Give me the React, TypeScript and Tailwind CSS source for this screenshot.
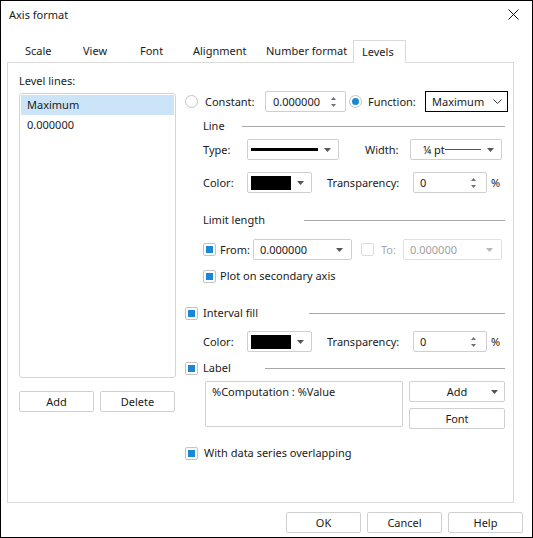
import type { ReactNode } from 'react';

const font = "font-['Noto_Sans',Arial,sans-serif]";

function Arrow({ disabled }: { disabled?: boolean }) {
  return (
    <svg width="7" height="4" viewBox="0 0 7 4" className="shrink-0">
      <path d="M0 0h7L3.5 4z" fill={disabled ? '#b8b8b8' : '#555555'} />
    </svg>
  );
}

function Spinner() {
  return (
    <svg width="7" height="12" viewBox="0 0 7 12" className="shrink-0">
      <path d="M3.5 1L6 4H1z" fill="#707070" />
      <path d="M3.5 11L6 8H1z" fill="#707070" />
    </svg>
  );
}

function Radio({ checked }: { checked?: boolean }) {
  return (
    <span className="flex h-[13px] w-[13px] shrink-0 items-center justify-center rounded-full border border-[#c4c4c4] bg-white">
      {checked && <span className="h-[7px] w-[7px] rounded-full bg-[#1c87d4]" />}
    </span>
  );
}

function Check({ checked, disabled }: { checked?: boolean; disabled?: boolean }) {
  return (
    <span
      className={`flex h-[13px] w-[13px] shrink-0 items-center justify-center rounded-[2px] border bg-white ${
        disabled ? 'border-[#dcdcdc]' : 'border-[#c4c4c4]'
      }`}
    >
      {checked && <span className="h-[7px] w-[7px] bg-[#1c87d4]" />}
    </span>
  );
}

function Box({ w, children, className = '' }: { w: string; children?: ReactNode; className?: string }) {
  return (
    <div className={`flex h-[21px] shrink-0 items-center rounded-[2px] border border-[#cfcfcf] bg-white ${w} ${className}`}>
      {children}
    </div>
  );
}

function Header({ label, lineStart, check }: { label: string; lineStart: string; check?: boolean }) {
  return (
    <div className="flex h-[16px] items-center">
      {check ? (
        <>
          <Check checked />
          <span className="ml-[5px]">{label}</span>
        </>
      ) : (
        <span className="ml-[18px]">{label}</span>
      )}
      <div className={`mr-[8px] h-px flex-1 bg-[#a8a8a8] ${lineStart}`} />
    </div>
  );
}

function ColorRow() {
  return (
    <div className="flex h-[21px] items-center pl-[18px]">
      <span className="w-[44px] shrink-0">Color:</span>
      <Box w="w-[65px]" className="justify-between pl-[3px] pr-[7px]">
        <span className="h-[14px] w-[40px] bg-black" />
        <Arrow />
      </Box>
      <span className="ml-[15px] w-[86px] shrink-0">Transparency:</span>
      <Box w="w-[74px]" className="justify-between pl-[6px] pr-[9px]">
        <span>0</span>
        <Spinner />
      </Box>
      <span className="ml-[4px]">%</span>
    </div>
  );
}

function Btn({ w, children, className = '' }: { w: string; children: ReactNode; className?: string }) {
  return (
    <div
      className={`flex h-[21px] shrink-0 items-center justify-center rounded-[2px] border border-[#d0d0d0] bg-white ${w} ${className}`}
    >
      {children}
    </div>
  );
}

export default function App() {
  const tabs = [
    { name: 'Scale', w: 'w-[58px]' },
    { name: 'View', w: 'w-[57px]' },
    { name: 'Font', w: 'w-[53px]' },
    { name: 'Alignment', w: 'w-[73px]' },
    { name: 'Number format', w: 'w-[96px]' },
  ];

  return (
    <div
      className={`${font} flex h-[538px] w-[533px] flex-col border border-black bg-white text-[11px] leading-[16px] whitespace-nowrap text-[#1b1b1b]`}
    >
      {/* Title bar */}
      <div className="flex h-[27px] shrink-0 items-center justify-between pl-[8px] pr-[13px]">
        <span>Axis format</span>
        <svg width="11" height="11" viewBox="0 0 11 11">
          <path d="M0.5 0.5l10 10M10.5 0.5l-10 10" stroke="#111" strokeWidth="1" />
        </svg>
      </div>

      {/* Tabs */}
      <div className="mt-[12px] flex h-[22px] shrink-0 items-start pl-[15px]">
        {tabs.map((t) => (
          <div key={t.name} className={`flex h-[22px] items-center pl-[9px] ${t.w}`}>
            {t.name}
          </div>
        ))}
        <div className="relative z-10 flex h-[23px] w-[53px] items-center border-x border-t border-[#d9d9d9] bg-white pl-[8px]">
          Levels
        </div>
      </div>

      {/* Panel */}
      <div className="ml-[6px] flex h-[441px] w-[507px] shrink-0 border border-[#d9d9d9]">
        {/* Left column */}
        <div className="flex w-[168px] shrink-0 flex-col pl-[11px] pt-[10px]">
          <div className="h-[16px]">Level lines:</div>
          <div className="mt-[4px] h-[285px] w-[157px] rounded-[3px] border border-[#d4d4d4] p-px">
            <div className="flex h-[20px] items-center bg-[#cce4f7] pl-[6px]">Maximum</div>
            <div className="flex h-[20px] items-center pl-[6px]">0.000000</div>
          </div>
          <div className="mt-[13px] flex gap-[6px]">
            <Btn w="w-[75px]">Add</Btn>
            <Btn w="w-[75px]">Delete</Btn>
          </div>
        </div>

        {/* Right column */}
        <div className="ml-[9px] flex flex-1 flex-col pt-[28px]">
          <div className="flex h-[21px] items-center">
            <Radio />
            <span className="ml-[7px] w-[60px] shrink-0">Constant:</span>
            <Box w="w-[81px]" className="justify-between pl-[7px] pr-[8px]">
              <span>0.000000</span>
              <Spinner />
            </Box>
            <span className="ml-[3px]">
              <Radio checked />
            </span>
            <span className="ml-[6px] w-[57px] shrink-0">Function:</span>
            <div className="flex h-[21px] w-[83px] shrink-0 items-center justify-between border border-black pl-[6px] pr-[5px]">
              <span>Maximum</span>
              <svg width="9" height="5" viewBox="0 0 9 5">
                <path d="M0.5 0.5L4.5 4.5L8.5 0.5" stroke="#333" fill="none" strokeWidth="1" />
              </svg>
            </div>
          </div>

          <div className="mt-[6px]">
            <Header label="Line" lineStart="ml-[17px]" />
          </div>

          <div className="mt-[5px] flex h-[21px] items-center pl-[18px]">
            <span className="w-[44px] shrink-0">Type:</span>
            <Box w="w-[92px]" className="justify-between pl-[3px] pr-[7px]">
              <span className="h-[3px] w-[67px] bg-black" />
              <Arrow />
            </Box>
            <span className="ml-[26px] w-[45px] shrink-0">Width:</span>
            <Box w="w-[92px]" className="pl-[12px] pr-[7px]">
              <span>¼ pt</span>
              <span className="h-px w-[36px] bg-[#555]" />
              <span className="ml-auto">
                <Arrow />
              </span>
            </Box>
          </div>

          <div className="mt-[12px]">
            <ColorRow />
          </div>

          <div className="mt-[19px]">
            <Header label="Limit length" lineStart="ml-[39px]" />
          </div>

          <div className="mt-[11px] flex h-[21px] items-center pl-[18px]">
            <Check checked />
            <span className="ml-[4px] w-[33px] shrink-0">From:</span>
            <Box w="w-[99px]" className="justify-between pl-[6px] pr-[8px]">
              <span>0.000000</span>
              <Arrow />
            </Box>
            <span className="ml-[9px]">
              <Check disabled />
            </span>
            <span className="ml-[7px] w-[22px] shrink-0 text-[#a8a8a8]">To:</span>
            <Box w="w-[99px]" className="justify-between border-[#e0e0e0] pl-[6px] pr-[8px] text-[#a0a0a0]">
              <span>0.000000</span>
              <Arrow disabled />
            </Box>
          </div>

          <div className="mt-[8px] flex h-[16px] items-center pl-[18px]">
            <Check checked />
            <span className="ml-[4px]">Plot on secondary axis</span>
          </div>

          <div className="mt-[21px]">
            <Header label="Interval fill" lineStart="ml-[51px]" check />
          </div>

          <div className="mt-[10px]">
            <ColorRow />
          </div>

          <div className="mt-[8px]">
            <Header label="Label" lineStart="ml-[34px]" check />
          </div>

          <div className="mt-[5px] flex pl-[20px]">
            <div className="h-[46px] w-[198px] shrink-0 rounded-[2px] border border-[#cfcfcf] px-[6px] pt-[2px]">
              %Computation : %Value
            </div>
            <div className="ml-[6px] flex flex-col gap-[6px]">
              <Btn w="w-[96px]" className="relative h-[20px]">
                Add
                <span className="absolute right-[6px] top-[8px] flex">
                  <Arrow />
                </span>
              </Btn>
              <Btn w="w-[96px]" className="h-[20px]">
                Font
              </Btn>
            </div>
          </div>

          <div className="mt-[16px] flex h-[16px] items-center">
            <Check checked />
            <span className="ml-[6px]">With data series overlapping</span>
          </div>
        </div>
      </div>

      {/* Footer */}
      <div className="mt-[9px] flex justify-end gap-[6px] pr-[9px]">
        <Btn w="w-[75px]" className="border-[#2a7bd0]">
          OK
        </Btn>
        <Btn w="w-[75px]">Cancel</Btn>
        <Btn w="w-[75px]">Help</Btn>
      </div>
    </div>
  );
}
